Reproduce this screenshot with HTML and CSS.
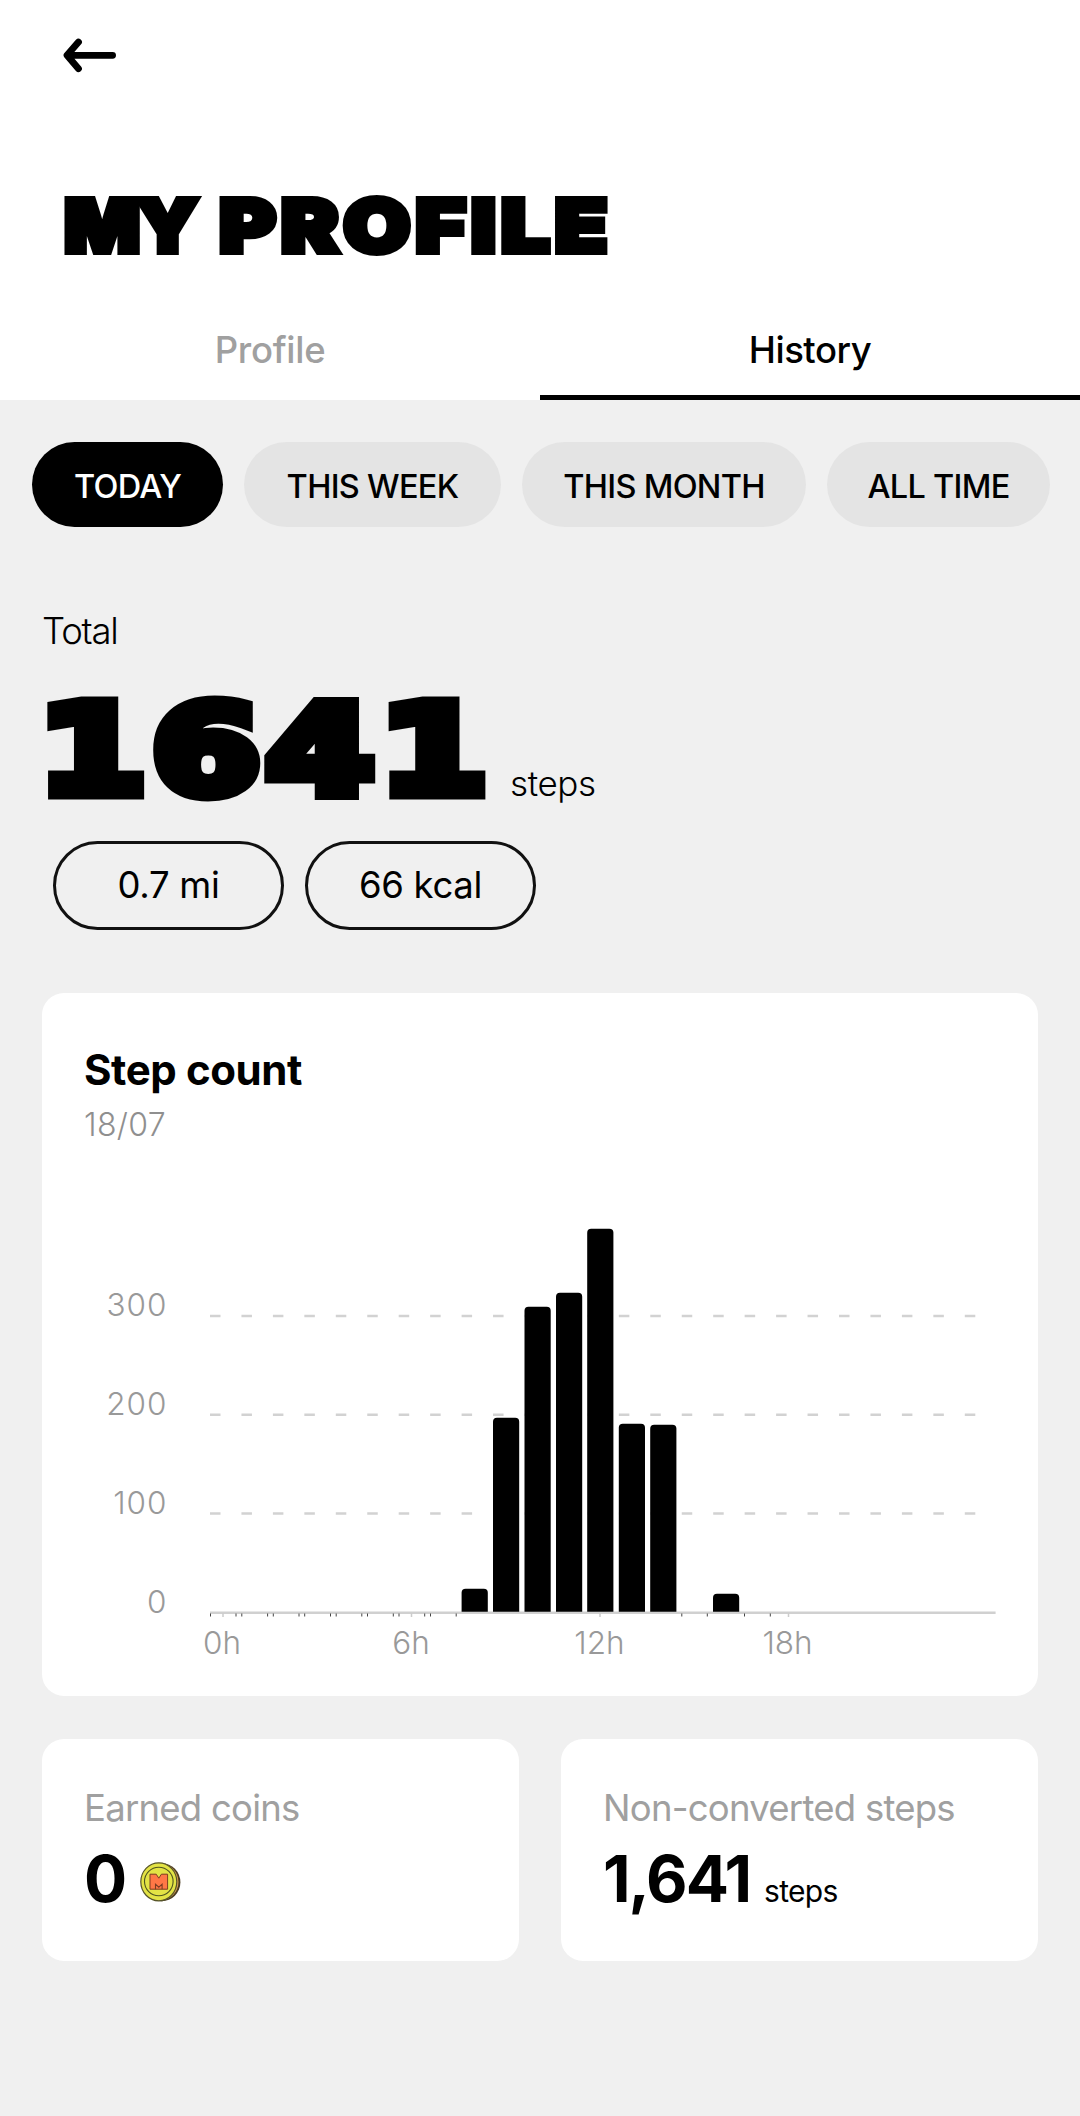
FILE: index.html
```html
<!DOCTYPE html>
<html lang="en">
<head>
<meta charset="utf-8">
<title>My profile</title>
<link rel="stylesheet" href="styles.css">
</head>
<body>
<header class="header">
  <svg class="back" viewBox="0 0 54 46" role="img" aria-label="Back">
    <path d="M49.600 22.300H5M15.500 9 4 22.300l11.500 13.400" fill="none" stroke="#000" stroke-width="6.800" stroke-linecap="round" stroke-linejoin="round"/>
  </svg>
  <h1 class="title"><span class="title-my">MY </span>PROFILE</h1>
  <nav class="tabs">
    <a class="tab"><span class="tab-profile">Profile</span></a>
    <a class="tab tab-active"><span>History</span></a>
  </nav>
</header>
<main class="main">
  <div class="filters">
    <button class="filter filter-active">TODAY</button>
    <button class="filter">THIS WEEK</button>
    <button class="filter">THIS MONTH</button>
    <button class="filter">ALL TIME</button>
  </div>
  <section class="total">
    <p class="total-label">Total</p>
    <div class="total-row">
      <div class="total-box"><span class="total-value">1641</span></div>
      <span class="total-unit">steps</span>
    </div>
    <div class="badges">
      <span class="badge">0.7 mi</span>
      <span class="badge">66 kcal</span>
    </div>
  </section>
  <section class="card chart-card">
    <h2 class="card-title">Step count</h2>
    <p class="date">18/07</p>
    <svg class="chart" viewBox="0 0 912 530">
      <g class="grid">
        <path d="M126 171H893M126 269.700H893M126 368.600H893"/>
      </g>
      <g class="y-labels">
        <text x="83.500" y="171">300</text>
        <text x="83.500" y="269.800">200</text>
        <text x="83.500" y="368.700">100</text>
        <text x="83.500" y="467.700">0</text>
      </g>
      <path class="axis" d="M126 467.700H911.600"/>
      <path class="ticks-light" d="M139 468v4M327.500 468v4M516 468v4M704.500 468v4"/>
      <path class="ticks" d="M126.500 468.500v3M152 468.500v3M157.800 468.500v3M183.600 468.500v3M189.300 468.500v3M215 468.500v3M220.700 468.500v3M246.500 468.500v3M252.200 468.500v3M277.800 468.500v3M283.500 468.500v3M309.300 468.500v3M315 468.500v3M340.700 468.500v3M346.500 468.500v3M372.200 468.500v3M597.800 468.500v3M623.300 468.500v3M660.500 468.500v3M686.300 468.500v3"/>
      <g class="bars">
        <path d="M377.600 466.700v-19q0-4 4-4h18.200q4 0 4 4v19z"/>
        <path d="M409 466.700v-190q0-4 4-4h18.200q4 0 4 4v190z"/>
        <path d="M440.500 466.700v-301q0-4 4-4h18.200q4 0 4 4v301z"/>
        <path d="M472 466.700v-315q0-4 4-4h18.200q4 0 4 4v315z"/>
        <path d="M503.200 466.700v-379q0-4 4-4h18.200q4 0 4 4v379z"/>
        <path d="M534.800 466.700v-184q0-4 4-4h18.200q4 0 4 4v184z"/>
        <path d="M566.200 466.700v-183q0-4 4-4h18.200q4 0 4 4v183z"/>
        <path d="M629 466.700v-14q0-4 4-4h18.200q4 0 4 4v14z"/>
      </g>
      <g class="x-labels">
        <text x="138" y="508.700">0h</text>
        <text x="327" y="508.700">6h</text>
        <text x="515.500" y="508.700">12h</text>
        <text x="703.500" y="508.700">18h</text>
      </g>
    </svg>
  </section>
  <div class="cards">
    <section class="card stat">
      <h3 class="stat-label earned">Earned coins</h3>
      <div class="stat-row">
        <span class="stat-value zero">0</span>
        <svg class="coin" viewBox="0 0 41 40" aria-hidden="true">
          <ellipse cx="21.700" cy="20.200" rx="18.700" ry="19" fill="#4a3b22"/>
          <ellipse cx="20.500" cy="20" rx="18" ry="18.400" fill="#d9a04e"/>
          <ellipse cx="18.800" cy="19.800" rx="18" ry="19" fill="#e3e345" stroke="#57552a" stroke-width="1.200"/>
          <circle cx="18.800" cy="19.500" r="14.300" fill="none" stroke="#4f5420" stroke-width="1.100"/>
          <path d="M10 12.200h6.200l2.600 4 2.600-4h6.200v15H10z" fill="#ff7746" stroke="#7c3c22" stroke-width="1"/>
          <path d="M15.500 27.200v-5l3.300 3 3.300-3v5" fill="none" stroke="#7c3c22" stroke-width="1.100"/>
        </svg>
      </div>
    </section>
    <section class="card stat">
      <h3 class="stat-label">Non-converted steps</h3>
      <div class="stat-row">
        <span class="stat-value">1,641</span>
        <span class="stat-unit">steps</span>
      </div>
    </section>
  </div>
</main>
</body>
</html>
```
FILE: styles.css
```css
* { box-sizing: border-box; margin: 0; padding: 0; }
body {
  width: 1080px;
  min-height: 2116px;
  background: #f0f0f0;
  color: #000;
  font-family: Inter, "Liberation Sans", sans-serif;
}
.header { height: 400px; padding-top: 33px; background: #fff; }
.back { display: block; width: 54px; height: 46px; margin-left: 63px; }
.title {
  width: 600px;
  margin: 107px 0 0 64px;
  font-size: 73.500px;
  line-height: 80px;
  font-weight: 900;
  letter-spacing: 4px;
  white-space: nowrap;
  transform: scaleX(1.180);
  transform-origin: 0 50%;
  -webkit-text-stroke: 6px #000;
}
.title-my {
  display: inline-block;
  white-space: pre;
  letter-spacing: -3.500px;
  transform: scaleX(0.920);
  transform-origin: 0 50%;
}
.tabs { display: grid; grid-template-columns: 1fr 1fr; margin-top: 33px; }
.tab {
  height: 101px;
  padding-top: 1px;
  text-align: center;
  font-size: 36.500px;
  line-height: 101px;
  font-weight: 500;
  letter-spacing: -0.300px;
  color: #a0a0a0;
}
.tab-active { color: #000; box-shadow: inset 0 -5px #000; letter-spacing: -0.500px; }
.filters {
  display: grid;
  grid-template-columns: 191px 257px 284px 223px;
  gap: 21px;
  padding: 42px 0 0 32px;
}
.filter {
  height: 85px;
  padding-top: 3px;
  border: 0;
  border-radius: 43px;
  background: #e4e4e4;
  color: #000;
  font: 500 32.500px Inter, "Liberation Sans", sans-serif;
  letter-spacing: -0.700px;
  white-space: nowrap;
}
.filter-active { background: #000; color: #fff; }
.total { padding: 82px 42px 0; }
.total-label { font-size: 36.500px; line-height: 44px; font-weight: 300; letter-spacing: -1.200px; }
.total-row { display: flex; align-items: flex-end; height: 110px; margin-top: 40px; }
.total-box { width: 468px; }
.total-value {
  display: block;
  width: 400px;
  font-family: "DejaVu Sans", sans-serif;
  font-size: 123px;
  line-height: 110px;
  font-weight: 700;
  letter-spacing: 4px;
  transform: translate(-4px, 3px) scaleX(1.270);
  transform-origin: 0 50%;
  -webkit-text-stroke: 13px #000;
}
.total-unit { font-size: 35px; line-height: 39px; font-weight: 300; letter-spacing: -0.400px; }
.badges { display: flex; gap: 21px; margin: 38px 0 0 11px; }
.badge {
  width: 231px;
  height: 89px;
  border: 3px solid #111;
  border-radius: 45px;
  font-size: 36.500px;
  line-height: 83px;
  letter-spacing: -0.300px;
  text-align: center;
}
.card { border-radius: 22px; background: #fff; }
.chart-card { height: 703px; margin: 63px 42px 0; padding: 52px 42px 0; }
.card-title { font-size: 42px; line-height: 50px; font-weight: 700; letter-spacing: -0.400px; }
.date { margin-top: 10px; font-size: 32px; line-height: 40px; font-weight: 300; letter-spacing: 0.300px; color: #8f8f8f; }
.chart { display: block; width: 912px; height: 530px; }
.grid { fill: none; stroke: #d2d2d2; stroke-width: 2.500; stroke-dasharray: 10.500 20.950; }
.axis { fill: none; stroke: #d0d0d0; stroke-width: 2.500; }
.ticks { stroke: #444; stroke-width: 1; }
.ticks-light { stroke: #ccc; stroke-width: 1.500; }
.y-labels, .x-labels { font-size: 31.500px; font-weight: 300; fill: #999; }
.y-labels { text-anchor: end; letter-spacing: 1px; }
.x-labels { text-anchor: middle; }
.cards { display: grid; grid-template-columns: 1fr 1fr; gap: 42px; margin: 43px 42px 0; }
.stat { height: 222px; padding: 46px 0 0 42px; }
.stat-label { font-size: 36.500px; line-height: 46px; font-weight: 400; letter-spacing: -0.750px; color: #a0a0a0; white-space: nowrap; }
.stat-row { display: flex; align-items: baseline; margin-top: 13px; line-height: 70px; }
.stat-value { font-size: 64px; font-weight: 700; letter-spacing: -2px; }
.coin { width: 41px; height: 40px; margin-left: 15px; }
.stat-unit { margin-left: 14px; font-size: 30px; letter-spacing: -0.700px; }
```
